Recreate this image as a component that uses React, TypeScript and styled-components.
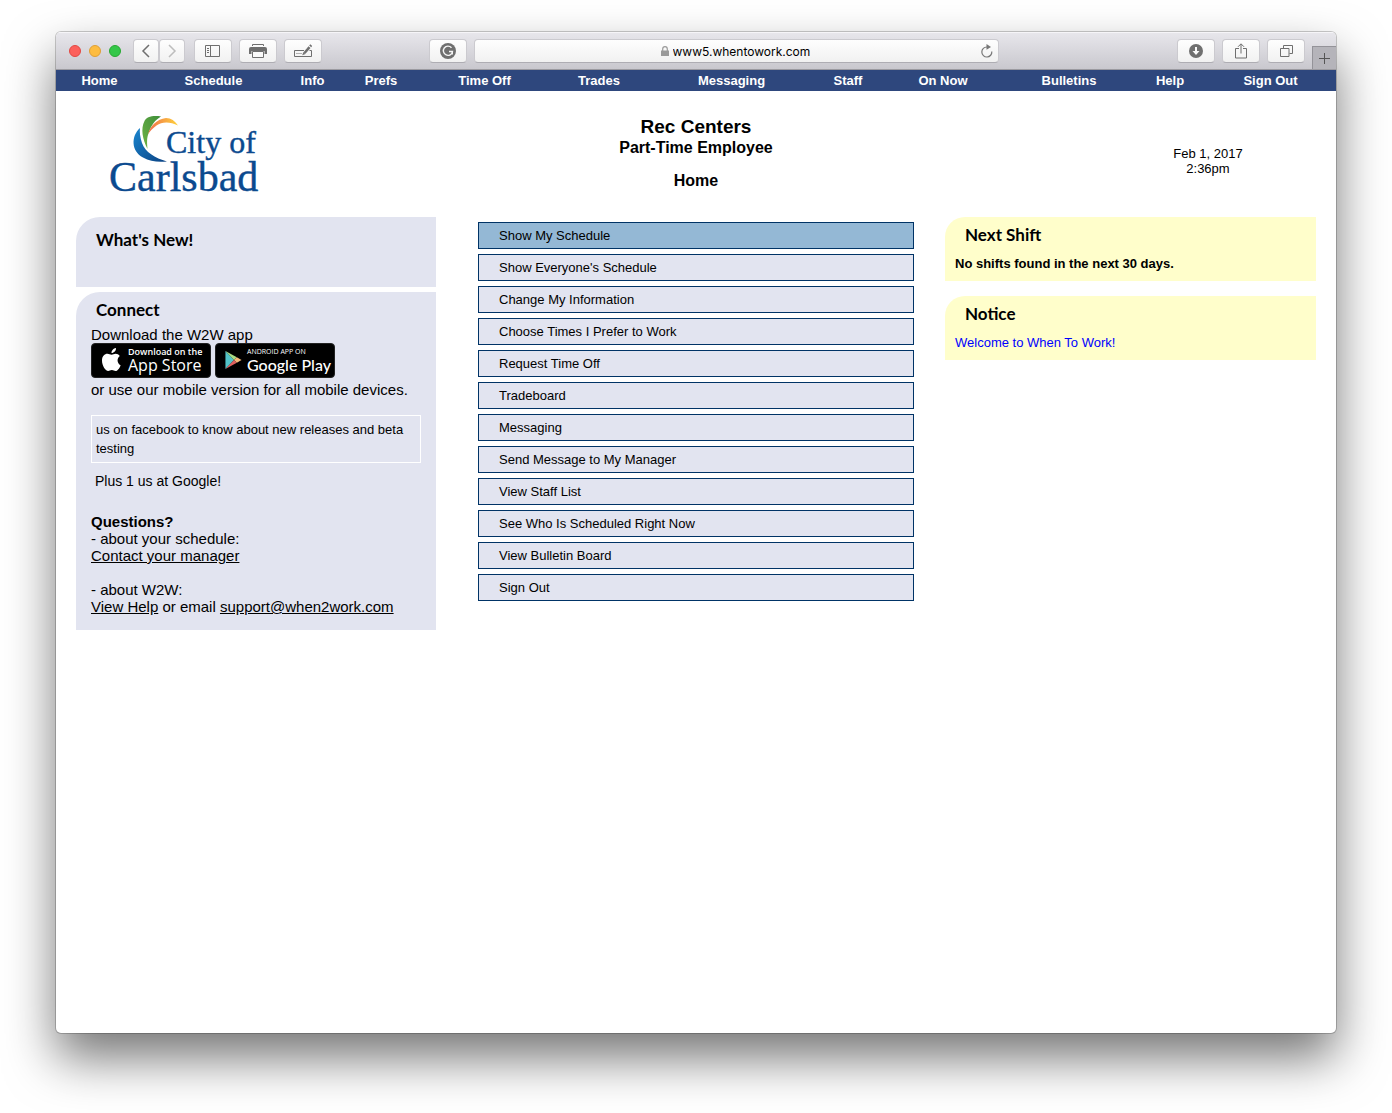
import React from "react";
import styled, { createGlobalStyle } from "styled-components";

const GlobalStyle = createGlobalStyle`
  *, *::before, *::after { box-sizing: border-box; }
  body {
    margin: 0;
    background: #fff;
    color: #000;
    font-family: "Liberation Sans", Arial, sans-serif;
    font-size: 15px;
    line-height: 17px;
  }
  h1, h2, h3, p, ul { margin: 0; padding: 0; }
  ul { list-style: none; }
  a { color: inherit; }
`;

const Desktop = styled.div`
  min-height: 100vh;
  padding: 32px 56px 80px;
  display: flex;
`;

const Window = styled.div`
  flex: 1;
  min-width: 0;
  display: flex;
  flex-direction: column;
  background: #fff;
  border-radius: 5px;
  overflow: hidden;
  box-shadow: 0 0 0 1px rgba(0, 0, 0, 0.2), 0 25px 50px rgba(0, 0, 0, 0.54);
`;

/* Browser toolbar */

const TitleBar = styled.div`
  height: 38px;
  flex: none;
  display: flex;
  align-items: flex-start;
  padding: 7px 0 0 13px;
  border-bottom: 1px solid #9b9aa0;
  background: linear-gradient(#e8e7ec, #c9c8ce);
  box-shadow: inset 0 1px 0 #f6f5f8;
`;

const Lights = styled.div`
  display: flex;
  gap: 8px;
  height: 24px;
  align-items: center;
  margin-right: 12px;
`;

const Light = styled.button<{ $fill: string; $edge: string }>`
  width: 12px;
  height: 12px;
  padding: 0;
  border-radius: 50%;
  border: 1px solid ${(p) => p.$edge};
  background: ${(p) => p.$fill};
`;

const ToolGroup = styled.div<{ $joined?: boolean }>`
  display: flex;
  gap: ${(p) => (p.$joined ? 0 : 7)}px;
  margin-right: ${(p) => (p.$joined ? 9 : 0)}px;
`;

const Tool = styled.button<{ $narrow?: boolean; $color?: string }>`
  width: ${(p) => (p.$narrow ? 26 : 38)}px;
  height: 24px;
  padding: 0;
  flex: none;
  display: flex;
  align-items: center;
  justify-content: center;
  color: ${(p) => p.$color || "#6f6f6f"};
  border: 1px solid #cbcacf;
  border-bottom-color: #aeadb3;
  border-radius: 4px;
  background: linear-gradient(#fefefe, #f1f1f1);
`;

const AddressArea = styled.div`
  flex: 1;
  min-width: 0;
  display: flex;
  gap: 7px;
  margin: 0 178px 0 107px;
`;

const AddressBar = styled.div`
  flex: 1;
  min-width: 0;
  height: 24px;
  display: flex;
  align-items: center;
  padding: 0 5px 0 17px;
  border: 1px solid #cbcacf;
  border-bottom-color: #aeadb3;
  border-radius: 4px;
  background: linear-gradient(#fefefe, #f1f1f1);
`;

const AddressLabel = styled.label`
  flex: 1;
  display: flex;
  align-items: center;
  justify-content: center;
  gap: 4px;
`;

const Address = styled.input`
  width: 140px;
  padding: 0;
  border: 0;
  background: none;
  color: #000;
  font: 12px/17px Inter, sans-serif;
`;

const Reload = styled.button`
  display: flex;
  padding: 0;
  border: 0;
  background: none;
  color: #777;
`;

const NewTab = styled.button`
  align-self: flex-end;
  width: 24px;
  height: 23px;
  margin-left: 7px;
  padding: 0;
  display: flex;
  align-items: center;
  justify-content: center;
  border: solid #949399;
  border-width: 1px 0 0 1px;
  background: #b5b4ba;
  color: #555;
`;

/* Site navigation */

const Nav = styled.nav`
  flex: none;
  display: flex;
  height: 21px;
  background: #2e477d;
`;

const NavLink = styled.a<{ $weight: number }>`
  flex: ${(p) => p.$weight} 1 0;
  min-width: 0;
  text-align: center;
  color: #fff;
  font-size: 13px;
  font-weight: bold;
  line-height: 21px;
  text-decoration: none;
  white-space: nowrap;
`;

const Header = styled.header`
  display: grid;
  grid-template-columns: 216px 1fr 216px;
  align-items: center;
  justify-items: center;
  text-align: center;
  padding: 22px 20px 24px;
`;

const Organization = styled.h1`
  font-size: 19px;
  line-height: 22px;
`;

const Subtitle = styled.h2`
  font-size: 16px;
  line-height: 19px;
`;

const PageTitle = styled(Subtitle)`
  margin-top: 14px;
`;

const Clock = styled.p`
  padding-top: 15px;
  font-size: 13px;
  line-height: 15px;
`;

const Columns = styled.main`
  display: grid;
  grid-template-columns: minmax(0, 360fr) minmax(0, 509fr) minmax(0, 371fr);
  align-items: start;
  padding: 0 20px 20px;
`;

const SideColumn = styled.div<{ $gap: number }>`
  display: flex;
  flex-direction: column;
  gap: ${(p) => p.$gap}px;
`;

const NewsPanel = styled.section`
  min-height: 70px;
  padding: 13px 15px 15px;
  background: #e2e4f0;
  border-top-left-radius: 24px;
`;

const ConnectPanel = styled(NewsPanel)`
  padding-top: 8px;
`;

const PanelTitle = styled.h3`
  padding-left: 5px;
  font: bold 17px/20px Lato, sans-serif;
`;

const Download = styled.div`
  margin-top: 6px;
`;

const Badges = styled.div`
  display: flex;
  flex-wrap: wrap;
  gap: 4px;
  margin-bottom: 3px;
`;

const Badge = styled.a`
  width: 120px;
  height: 35px;
  display: flex;
  align-items: center;
  gap: 5px;
  padding: 0 0 2px 9px;
  border-radius: 4px;
  border: 1px solid #222;
  background: #000;
  color: #fff;
  text-decoration: none;
  white-space: nowrap;
`;

const BadgeText = styled.span`
  display: flex;
  flex-direction: column;
`;

const BadgeSmall = styled.span<{ $bold?: boolean }>`
  font: ${(p) => (p.$bold ? "600 9px/11px" : "400 7px/10px")} "Open Sans", sans-serif;
`;

const BadgeName = styled.span<{ $family: string }>`
  font: 500 16px/16px ${(p) => p.$family}, sans-serif;
`;

const FacebookNote = styled.p`
  margin: 17px 0 9px;
  padding: 4px;
  border: 1px solid #fff;
  font-size: 13px;
  line-height: 19px;
`;

const PlusOne = styled.p`
  padding-left: 4px;
  font-size: 14px;
  line-height: 19px;
`;

const Questions = styled.div`
  margin-top: 22px;
`;

const QuestionBlock = styled.p`
  & + & { margin-top: 17px; }
`;

const Menu = styled.ul`
  display: flex;
  flex-direction: column;
  gap: 5px;

  && { padding: 5px 31px 0 42px; }
`;

const MenuLink = styled.a<{ $active?: boolean }>`
  display: block;
  padding: 0 20px;
  border: 1px solid #003366;
  background: ${(p) => (p.$active ? "#94b8d5" : "#e2e4f0")};
  font-size: 13px;
  line-height: 25px;
  text-decoration: none;
`;

const NoticePanel = styled.section`
  min-height: 64px;
  padding: 8px 10px 9px;
  background: #fffecb;
  border-top-left-radius: 20px;
  font-size: 13px;
`;

const NoticeTitle = styled(PanelTitle)`
  padding-left: 10px;
  margin-bottom: 10px;
`;

const NoticeLink = styled.a`
  color: #0000ff;
  text-decoration: none;
`;

const navItems: [string, number][] = [
  ["Home", 87],
  ["Schedule", 141],
  ["Info", 57],
  ["Prefs", 80],
  ["Time Off", 127],
  ["Trades", 102],
  ["Messaging", 163],
  ["Staff", 70],
  ["On Now", 120],
  ["Bulletins", 132],
  ["Help", 70],
  ["Sign Out", 131],
];

const menuItems = [
  "Show My Schedule",
  "Show Everyone's Schedule",
  "Change My Information",
  "Choose Times I Prefer to Work",
  "Request Time Off",
  "Tradeboard",
  "Messaging",
  "Send Message to My Manager",
  "View Staff List",
  "See Who Is Scheduled Right Now",
  "View Bulletin Board",
  "Sign Out",
];

const Chevron = ({ d }: { d: string }) => (
  <svg width="10" height="14" viewBox="0 0 10 14" fill="none" stroke="currentColor" strokeWidth="1.5">
    <path d={d} />
  </svg>
);

const SidebarIcon = () => (
  <svg width="16" height="12" viewBox="0 0 16 12" fill="none" stroke="currentColor">
    <path d="M.5.5h14v11H.5zM5.5.5v11M2 3.500h2M2 5.500h2M2 7.500h2" />
  </svg>
);

const PrintIcon = () => (
  <svg width="18" height="14" viewBox="0 0 18 14">
    <path d="M3.500 2V.5h11V2" fill="none" stroke="currentColor" />
    <path d="M2 3h14a2 2 0 0 1 2 2v5h-2.500V7h-13v3H0V5a2 2 0 0 1 2-2z" fill="currentColor" />
    <path d="M3.500 7.500h11v6h-11z" fill="#fafafa" stroke="currentColor" />
  </svg>
);

const EditIcon = () => (
  <svg width="18" height="14" viewBox="0 0 18 14" fill="none" stroke="currentColor">
    <path d="M10 6.500H.5v6h17v-6h-2" />
    <path d="M2.500 9.500h5" strokeDasharray="1 1" />
    <path d="M10.500 9 15.500 3.200" strokeWidth="2.600" />
    <path d="M16.200 2.400 17.300 1.100" strokeWidth="2.600" />
    <path d="m8.200 11.300 1.300-3.200 2 1.800z" fill="currentColor" stroke="none" />
  </svg>
);

const GrammarIcon = () => (
  <svg width="16" height="16" viewBox="0 0 16 16" fill="none">
    <circle cx="8" cy="8" r="8" fill="currentColor" />
    <path d="M11.500 4.800A4.600 4.600 0 1 0 12.500 8.500H9M12.300 8.500v3" stroke="#f5f5f5" strokeWidth="1.400" />
  </svg>
);

const LockIcon = () => (
  <svg width="8" height="10" viewBox="0 0 8 10">
    <path d="M1.700 5V3a2.300 2.300 0 0 1 4.600 0v2" fill="none" stroke="#999" strokeWidth="1.200" />
    <path d="M0 4.500h8V10H0z" fill="#999" />
  </svg>
);

const ReloadIcon = () => (
  <svg width="12" height="14" viewBox="0 0 12 14">
    <path d="M10.800 7.500A5 5 0 1 1 6 3" fill="none" stroke="currentColor" strokeWidth="1.200" />
    <path d="M5.500 0 10 3 5.500 5.800z" fill="currentColor" />
  </svg>
);

const DownloadIcon = () => (
  <svg width="14" height="14" viewBox="0 0 14 14">
    <circle cx="7" cy="7" r="7" fill="currentColor" />
    <path d="M6 3h2v4h2.500L7 11 3.500 7H6z" fill="#fafafa" />
  </svg>
);

const ShareIcon = () => (
  <svg width="12" height="16" viewBox="0 0 12 16" fill="none" stroke="currentColor">
    <path d="M4 5.500H.5v9.500h11V5.500H8M6 10.500V1M3 3.800 6 .8l3 3" />
  </svg>
);

const TabsIcon = () => (
  <svg width="13" height="12" viewBox="0 0 13 12" fill="none" stroke="currentColor">
    <path d="M.5 3.500h8.500v8H.5zM3.500 3V.5h9v8H9.500" />
  </svg>
);

const PlusIcon = () => (
  <svg width="11" height="11" viewBox="0 0 11 11" stroke="currentColor">
    <path d="M5.500 0v11M0 5.500h11" />
  </svg>
);

const CityLogo = () => (
  <svg width="156" height="80" viewBox="-3 -2 156 80" overflow="visible" role="img" aria-label="City of Carlsbad">
    <defs>
      <linearGradient id="leafBlue" x1="0" y1="0" x2="1" y2="1">
        <stop offset="0" stopColor="#1a86cf" />
        <stop offset="1" stopColor="#0b4283" />
      </linearGradient>
      <linearGradient id="leafGreen" x1="1" y1="0" x2="0" y2="1">
        <stop offset="0" stopColor="#3f8f3b" />
        <stop offset="1" stopColor="#6fb344" />
      </linearGradient>
      <linearGradient id="leafOrange">
        <stop offset="0" stopColor="#ee6f4c" />
        <stop offset="1" stopColor="#ffd23c" />
      </linearGradient>
    </defs>
    <path d="M31 13C22 21 22 36 34 42.500c7 4 15 5 24 4C46 43 36 37 33 28 31 22 30.500 17 31 13z" fill="url(#leafBlue)" />
    <path d="M52 1.500C44 0 37 2 35.500 6c-4 8-2 18 3 28-.5-7-1-11 1.500-17C42.500 10 46 5 52 1.500z" fill="url(#leafGreen)" />
    <path d="M39 19.500C41 11 48 4 57 3c5 0 9 3 12 7.500C61 6.500 53 6.500 47.500 10.500c-4 3-6.500 5.500-8.500 9z" fill="url(#leafOrange)" />
    <g fill="#0b4a8f" stroke="#0b4a8f" strokeWidth="0.400" fontFamily="'Liberation Serif', serif">
      <text x="57" y="38" fontSize="32">City of</text>
      <text x="0" y="76" fontSize="42">Carlsbad</text>
    </g>
  </svg>
);

const AppleIcon = () => (
  <svg width="22" height="24" viewBox="0 0 22 24" fill="#fff">
    <path d="M15 0c.2 2.600-2 5-4.500 5C10.300 2.700 12.500.3 15 0z" />
    <path d="M18.800 8C17.700 6.500 16.200 5.800 14.700 5.800c-1.900 0-2.700 1-4.100 1S8 5.800 6.400 5.800C3.700 5.800 1 8.200 1 12.500 1 17.500 4.400 23 7.200 23c1.300 0 2-.9 3.700-.9s2.200.9 3.700.9c2.200 0 4.200-3.300 5-5.800-3.700-1.700-4-7-.8-9.200z" />
  </svg>
);

const PlayIcon = () => (
  <svg width="17" height="18" viewBox="0 0 17 19" overflow="visible">
    <path d="M0 0v19l9-9.500z" fill="#52c3c8" />
    <path d="M0 0l12 6.500-3 3z" fill="#a9dc84" />
    <path d="M12 6.500l5 3-5 3-3-3z" fill="#f5b878" />
    <path d="M0 19l12-6.500-3-3z" fill="#e0605e" />
  </svg>
);

export default function App() {
  return (
    <Desktop>
      <GlobalStyle />
      <Window>
        <TitleBar>
          <Lights>
            <Light $fill="#fc605c" $edge="#e24843" aria-label="Close" />
            <Light $fill="#fdbc40" $edge="#df9f35" aria-label="Minimize" />
            <Light $fill="#34c749" $edge="#27a932" aria-label="Zoom" />
          </Lights>
          <ToolGroup $joined>
            <Tool $narrow aria-label="Back"><Chevron d="M8 1 2 7l6 6" /></Tool>
            <Tool $narrow $color="#bdbdbd" aria-label="Forward"><Chevron d="m2 1 6 6-6 6" /></Tool>
          </ToolGroup>
          <ToolGroup>
            <Tool aria-label="Sidebar"><SidebarIcon /></Tool>
            <Tool aria-label="Print"><PrintIcon /></Tool>
            <Tool aria-label="Edit"><EditIcon /></Tool>
          </ToolGroup>
          <AddressArea>
            <Tool aria-label="Grammar check"><GrammarIcon /></Tool>
            <AddressBar>
              <AddressLabel>
                <LockIcon />
                <Address aria-label="Address" defaultValue="www5.whentowork.com" />
              </AddressLabel>
              <Reload aria-label="Reload"><ReloadIcon /></Reload>
            </AddressBar>
          </AddressArea>
          <ToolGroup>
            <Tool aria-label="Downloads"><DownloadIcon /></Tool>
            <Tool aria-label="Share"><ShareIcon /></Tool>
            <Tool aria-label="Show tabs"><TabsIcon /></Tool>
          </ToolGroup>
          <NewTab aria-label="New tab"><PlusIcon /></NewTab>
        </TitleBar>
        <Nav>
          {navItems.map(([label, weight]) => (
            <NavLink key={label} href="#" $weight={weight}>{label}</NavLink>
          ))}
        </Nav>
        <Header>
          <CityLogo />
          <div>
            <Organization>Rec Centers</Organization>
            <Subtitle>Part-Time Employee</Subtitle>
            <PageTitle>Home</PageTitle>
          </div>
          <Clock>Feb 1, 2017<br />2:36pm</Clock>
        </Header>
        <Columns>
          <SideColumn $gap={5}>
            <NewsPanel>
              <PanelTitle>What's New!</PanelTitle>
            </NewsPanel>
            <ConnectPanel>
              <PanelTitle>Connect</PanelTitle>
              <Download>
                <p>Download the W2W app</p>
                <Badges>
                  <Badge href="#">
                    <AppleIcon />
                    <BadgeText>
                      <BadgeSmall $bold>Download on the</BadgeSmall>
                      <BadgeName $family="'Open Sans'">App Store</BadgeName>
                    </BadgeText>
                  </Badge>
                  <Badge href="#">
                    <PlayIcon />
                    <BadgeText>
                      <BadgeSmall>ANDROID APP ON</BadgeSmall>
                      <BadgeName $family="Lato">Google Play</BadgeName>
                    </BadgeText>
                  </Badge>
                </Badges>
                <p>or use our mobile version for all mobile devices.</p>
              </Download>
              <FacebookNote>us on facebook to know about new releases and beta testing</FacebookNote>
              <PlusOne>Plus 1 us at Google!</PlusOne>
              <Questions>
                <QuestionBlock>
                  <b>Questions?</b><br />
                  - about your schedule:<br />
                  <a href="#">Contact your manager</a>
                </QuestionBlock>
                <QuestionBlock>
                  - about W2W:<br />
                  <a href="#">View Help</a> or email <a href="#">support@when2work.com</a>
                </QuestionBlock>
              </Questions>
            </ConnectPanel>
          </SideColumn>
          <Menu>
            {menuItems.map((label, i) => (
              <li key={label}>
                <MenuLink href="#" $active={i === 0}>{label}</MenuLink>
              </li>
            ))}
          </Menu>
          <SideColumn $gap={15}>
            <NoticePanel>
              <NoticeTitle>Next Shift</NoticeTitle>
              <b>No shifts found in the next 30 days.</b>
            </NoticePanel>
            <NoticePanel>
              <NoticeTitle>Notice</NoticeTitle>
              <NoticeLink href="#">Welcome to When To Work!</NoticeLink>
            </NoticePanel>
          </SideColumn>
        </Columns>
      </Window>
    </Desktop>
  );
}
